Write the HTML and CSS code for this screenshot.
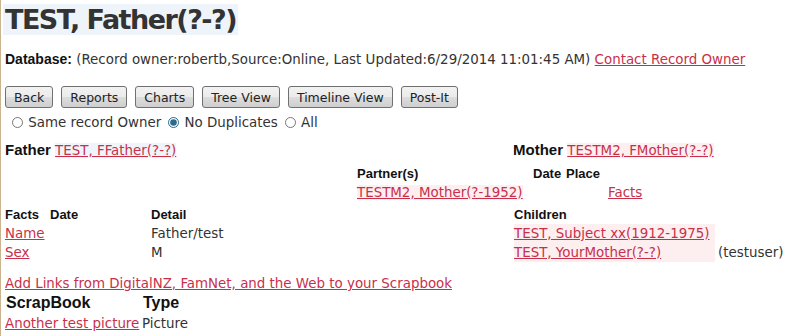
FILE: index.html
```html
<!DOCTYPE html>
<html lang="en">
	<head>
		<meta charset="UTF-8" />
		<title>TEST, Father(?-?)</title>
		<link rel="stylesheet" href="styles.css">
	</head>
	<body>
		<div class="page">
			<h1 class="title">TEST, Father(?-?)</h1>

			<p class="db">
				<b>Database:</b> (Record owner:robertb,Source:Online, Last Updated:6/29/2014 11:01:45 AM)
				<a href="#">Contact Record Owner</a>
			</p>

			<div class="buttons">
				<button>Back</button>
				<button>Reports</button>
				<button>Charts</button>
				<button>Tree View</button>
				<button>Timeline View</button>
				<button>Post-It</button>
			</div>

			<div class="filter">
				<label><input type="radio" name="dup" /> Same record Owner</label>
				<label><input type="radio" name="dup" checked /> No Duplicates</label>
				<label><input type="radio" name="dup" /> All</label>
			</div>

			<div class="parents">
				<div class="father">
					<b>Father</b> <a href="#" class="hl-blue">TEST, FFather(?-?)</a>
				</div>
				<div class="mother">
					<b>Mother</b> <a href="#" class="hl">TESTM2, FMother(?-?)</a>
				</div>
			</div>

			<table class="partners">
				<tr>
					<th class="p-name">Partner(s)</th>
					<th class="p-date">Date</th>
					<th>Place</th>
				</tr>
				<tr>
					<td class="p-name"><a href="#" class="hl">TESTM2, Mother(?-1952)</a></td>
					<td colspan="2" class="p-facts"><a href="#">Facts</a></td>
				</tr>
			</table>

			<div class="details">
				<table class="facts">
					<tr>
						<th class="f-fact">Facts</th>
						<th class="f-date">Date</th>
						<th>Detail</th>
					</tr>
					<tr>
						<td><a href="#">Name</a></td>
						<td></td>
						<td>Father/test</td>
					</tr>
					<tr>
						<td><a href="#">Sex</a></td>
						<td></td>
						<td>M</td>
					</tr>
				</table>

				<table class="children">
					<tr>
						<th>Children</th>
						<th></th>
					</tr>
					<tr>
						<td class="hl-cell"><a href="#">TEST, Subject xx(1912-1975)</a></td>
						<td></td>
					</tr>
					<tr>
						<td class="hl-cell"><a href="#">TEST, YourMother(?-?)</a></td>
						<td class="owner">(testuser)</td>
					</tr>
				</table>
			</div>

			<p class="addlinks"><a href="#">Add Links from DigitalNZ, FamNet, and the Web to your Scrapbook</a></p>

			<table class="scrap">
				<tr>
					<th>ScrapBook</th>
					<th>Type</th>
				</tr>
				<tr>
					<td><a href="#">Another test picture</a></td>
					<td>Picture</td>
				</tr>
			</table>
		</div>
	</body>
</html>
```

FILE: styles.css
```css
body {
	margin: 0;
	font-family: 'DejaVu Sans', Verdana, sans-serif;
	font-size: 13.4px;
	color: #333;
	background: #fff;
}

.page {
	border-left: 1px solid #c9b48f;
	padding: 4px 0 0 4px;
	min-height: 332px;
}

a {
	color: #c8304a;
}

b,
th {
	font-family: 'Liberation Sans', Arial, sans-serif;
	font-weight: bold;
	color: #111;
}

.title {
	display: inline-block;
	margin: 0 0 0 -2px;
	padding: 1px 2px 0 2px;
	background-color: #eef4fa;
	font-family: 'DejaVu Sans', Verdana, sans-serif;
	font-size: 27px;
	letter-spacing: -1.5px;
	color: #333;
	line-height: 30px;
}

.db {
	margin: 15px 0 0 0;
	line-height: 18px;
	white-space: nowrap;
}

.db b {
	font-size: 14px;
}

.buttons {
	display: flex;
	gap: 8px;
	margin-top: 17px;
}

button {
	font-family: 'DejaVu Sans', Verdana, sans-serif;
	font-size: 12.5px;
	color: #222;
	height: 22px;
	padding: 0 8px;
	border: 1px solid #707070;
	border-radius: 3px;
	background: linear-gradient(#f2f2f2, #ebebeb 50%, #dddddd 50%, #cfcfcf);
}

.filter {
	display: flex;
	gap: 0;
	margin-top: 6px;
	line-height: 18px;
	white-space: nowrap;
}

.filter input {
	margin: 0 1px 0 7px;
	width: 11px;
	height: 11px;
	vertical-align: -1px;
	accent-color: #2a6a8a;
}

.parents {
	display: flex;
	margin-top: 9px;
	line-height: 18px;
}

.father {
	width: 508px;
}

.parents b {
	font-size: 15px;
}

.hl {
	background-color: #fdeef0;
}

.hl-blue {
	background-color: #eef4fa;
}

table {
	border-collapse: collapse;
}

th,
td {
	padding: 0;
	text-align: left;
	line-height: 19px;
	white-space: nowrap;
}

th {
	font-size: 13px;
}

.partners {
	margin: 4px 0 0 352px;
}

.partners .p-name {
	width: 176px;
}

.partners .p-date {
	width: 33px;
}

.p-facts {
	padding-left: 75px;
}

.details {
	display: flex;
	margin-top: 3px;
}

.facts {
	width: 509px;
}

.f-fact {
	width: 45px;
}

.f-date {
	width: 101px;
}

.children td.hl-cell {
	background-color: #fdeef0;
	width: 201px;
}

.owner {
	padding-left: 3px;
}

.addlinks {
	margin: 13px 0 0 0;
	line-height: 18px;
}

.scrap th {
	font-size: 16px;
	line-height: 20px;
	padding-left: 1px;
}

.scrap th:first-child {
	width: 136px;
}

.scrap td {
	line-height: 22px;
}
```
